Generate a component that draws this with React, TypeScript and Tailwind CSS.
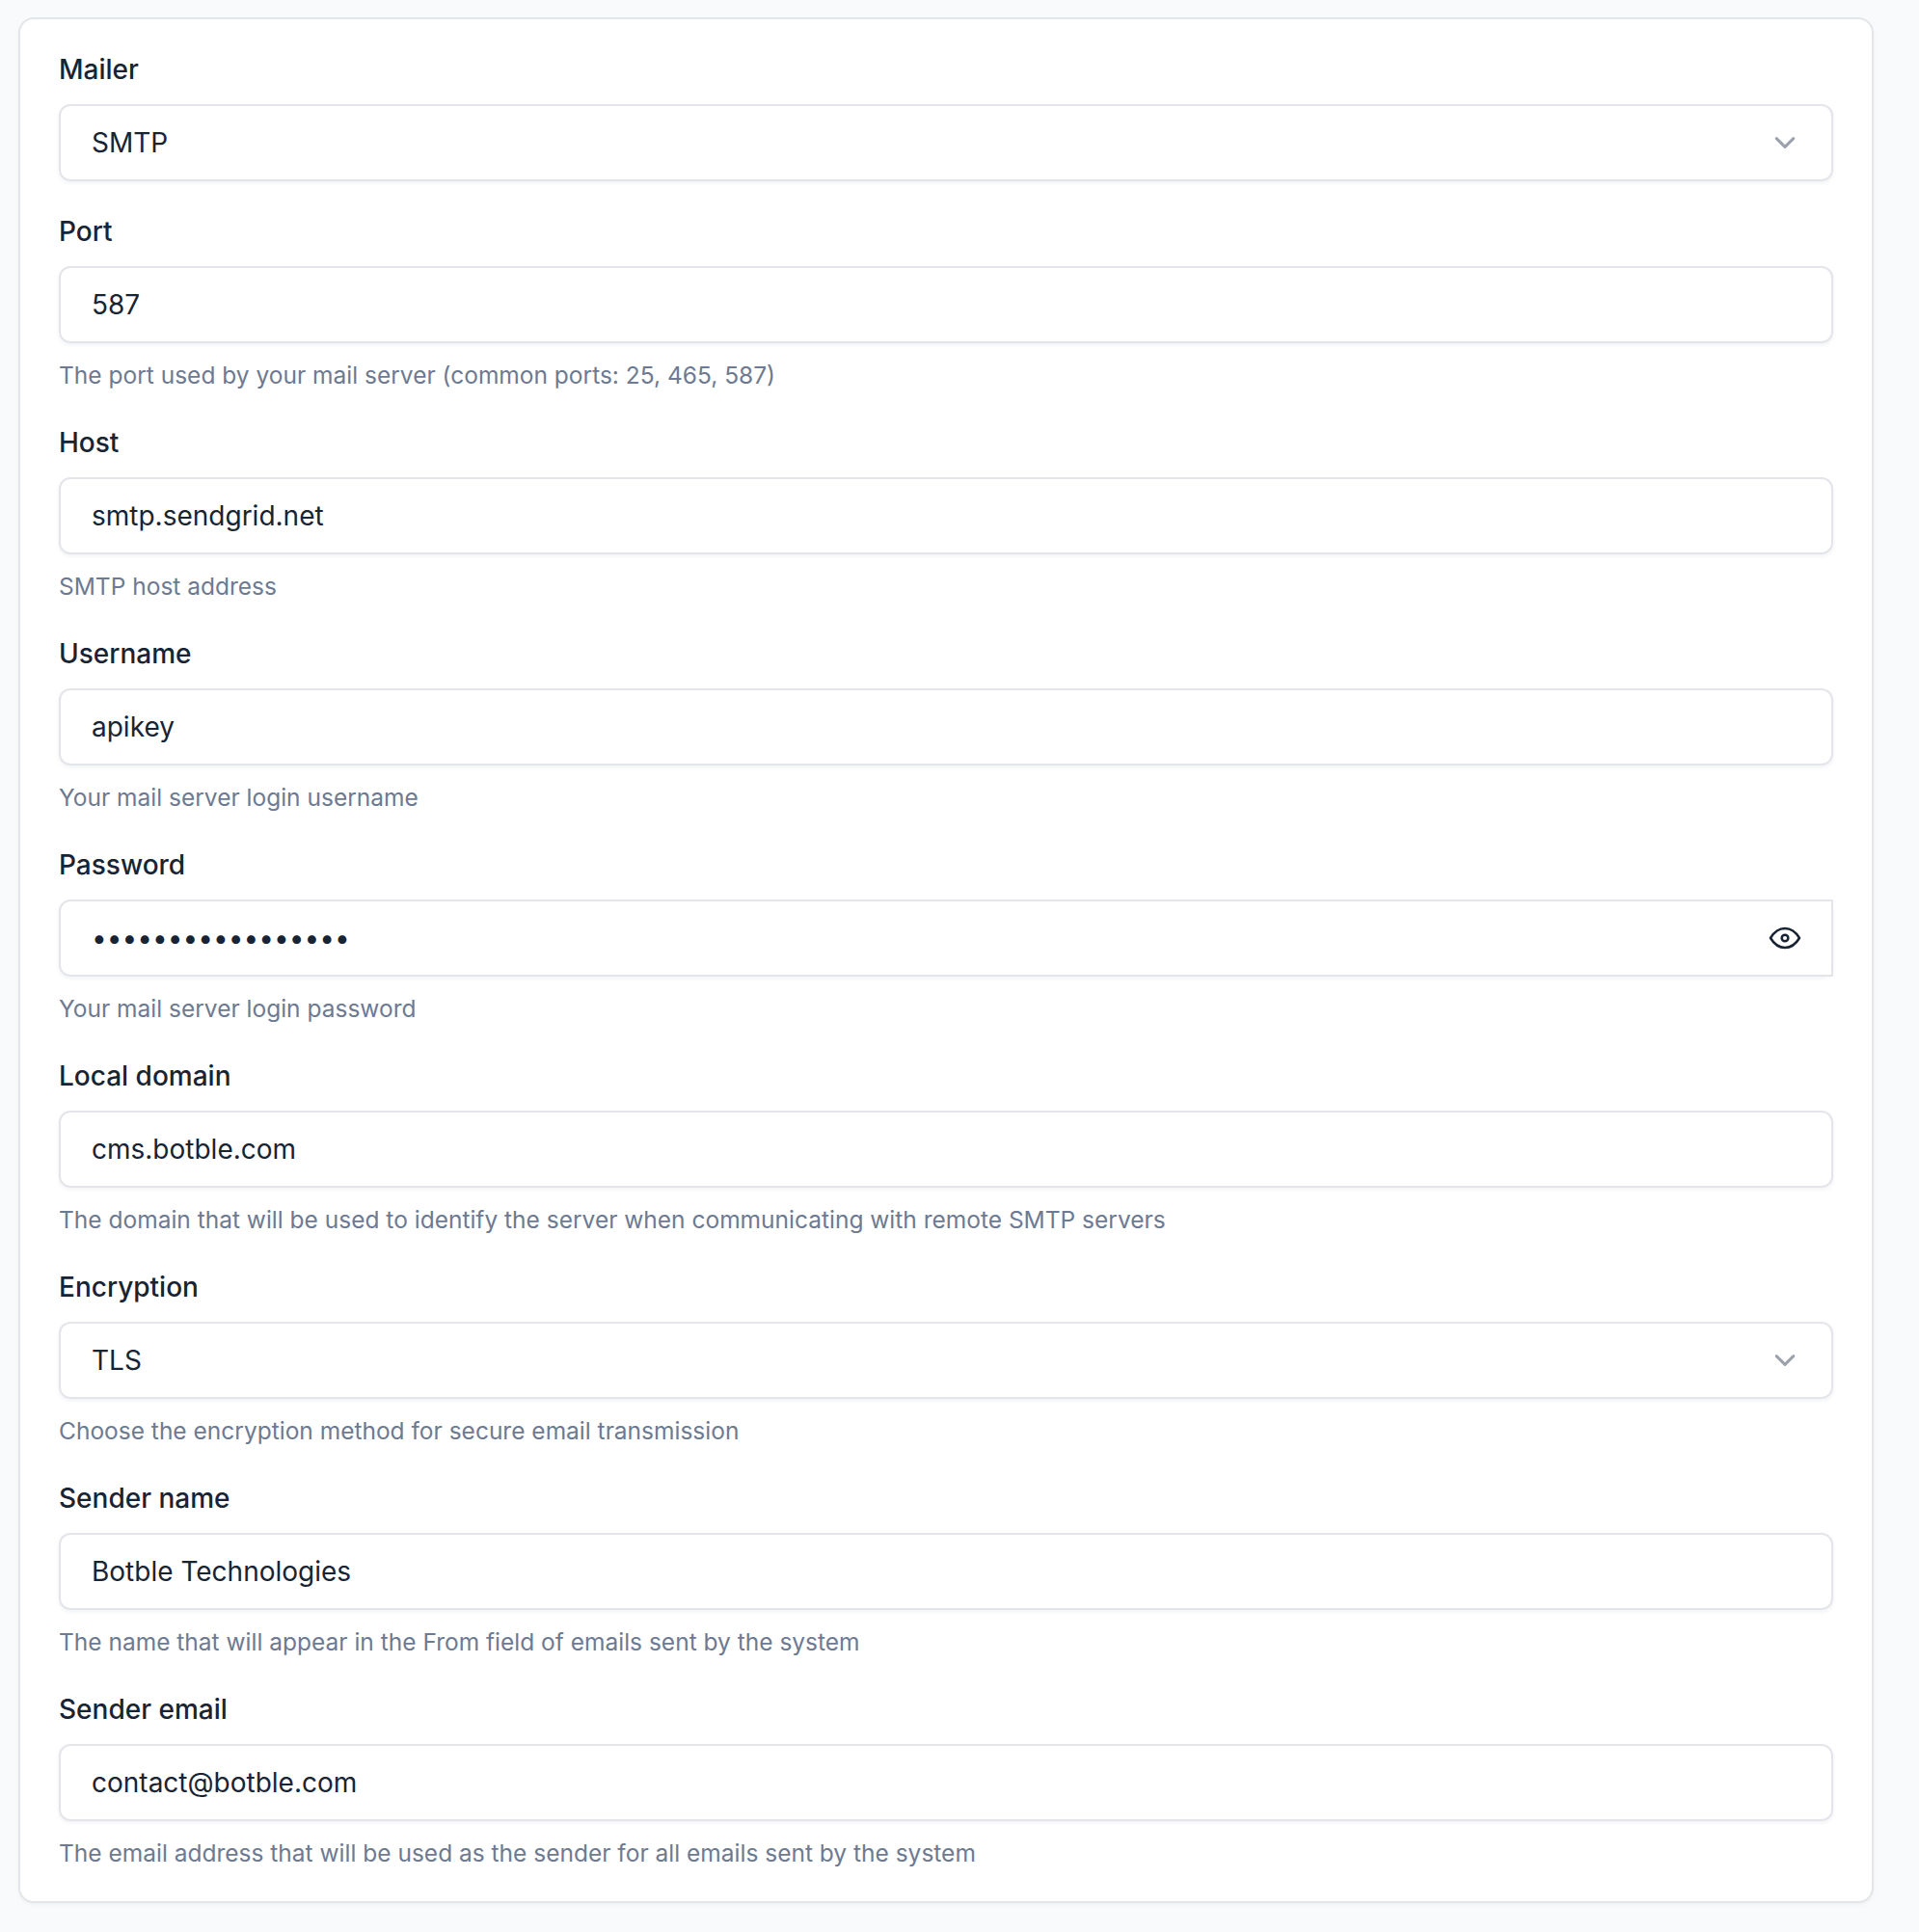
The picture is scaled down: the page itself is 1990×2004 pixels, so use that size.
import clsx from "clsx"

type Field = {
  label: string
  value: string
  hint?: string
  type?: "select" | "password"
}

const fields: Field[] = [
  { label: "Mailer", value: "SMTP", type: "select" },
  { label: "Port", value: "587", hint: "The port used by your mail server (common ports: 25, 465, 587)" },
  { label: "Host", value: "smtp.sendgrid.net", hint: "SMTP host address" },
  { label: "Username", value: "apikey", hint: "Your mail server login username" },
  { label: "Password", value: "•••••••••••••••••", hint: "Your mail server login password", type: "password" },
  {
    label: "Local domain",
    value: "cms.botble.com",
    hint: "The domain that will be used to identify the server when communicating with remote SMTP servers",
  },
  {
    label: "Encryption",
    value: "TLS",
    hint: "Choose the encryption method for secure email transmission",
    type: "select",
  },
  {
    label: "Sender name",
    value: "Botble Technologies",
    hint: "The name that will appear in the From field of emails sent by the system",
  },
  {
    label: "Sender email",
    value: "contact@botble.com",
    hint: "The email address that will be used as the sender for all emails sent by the system",
  },
]

function ChevronIcon() {
  return (
    <svg
      className="w-10 h-10 text-[#9ca1ae]"
      viewBox="0 0 40 40"
      fill="none"
      stroke="currentColor"
      strokeWidth="3"
      strokeLinecap="round"
      strokeLinejoin="round"
    >
      <path d="M11.2 15.6l8.8 8.8l8.8 -8.8" />
    </svg>
  )
}

function EyeIcon() {
  return (
    <svg
      className="w-10 h-10"
      viewBox="0 0 24 24"
      fill="none"
      stroke="currentColor"
      strokeWidth="1.5"
      strokeLinecap="round"
      strokeLinejoin="round"
    >
      <path d="M10 12a2 2 0 1 0 4 0a2 2 0 0 0 -4 0" />
      <path d="M21 12c-2.4 4 -5.4 6 -9 6c-3.6 0 -6.6 -2 -9 -6c2.4 -4 5.4 -6 9 -6c3.6 0 6.6 2 9 6" />
    </svg>
  )
}

function FormField({ label, value, hint, type }: Field) {
  return (
    <div>
      <div className="mb-4 text-[28px] leading-10 font-medium">{label}</div>
      {/* The shadow stays rounded even where the password box has square corners */}
      <div className="rounded-xl shadow-[0_2px_4px_rgba(24,36,51,0.06)]">
        <div
          className={clsx(
            "flex h-20 items-center justify-between border-2 border-[#e4e5ea] bg-white pl-8 pr-7",
            type === "password" ? "rounded-l-xl" : "rounded-xl",
          )}
        >
          <span className="text-[28px] leading-10">{value}</span>
          {type === "select" && <ChevronIcon />}
          {type === "password" && <EyeIcon />}
        </div>
      </div>
      {hint && <div className="mt-4 text-[24.5px] leading-[35px] text-[#6d7a91]">{hint}</div>}
    </div>
  )
}

export default function App() {
  return (
    <div className="h-[2004px] bg-[#f9fafb] pt-[18px] pl-[19px] pr-[47px] font-['Inter',sans-serif] text-[#182433]">
      <div className="flex h-[1956px] flex-col gap-8 rounded-2xl border-2 border-[#e4e5ea] bg-white px-10 py-8 shadow-[0_2px_4px_rgba(24,36,51,0.04)]">
        {fields.map((field) => (
          <FormField key={field.label} {...field} />
        ))}
      </div>
    </div>
  )
}
